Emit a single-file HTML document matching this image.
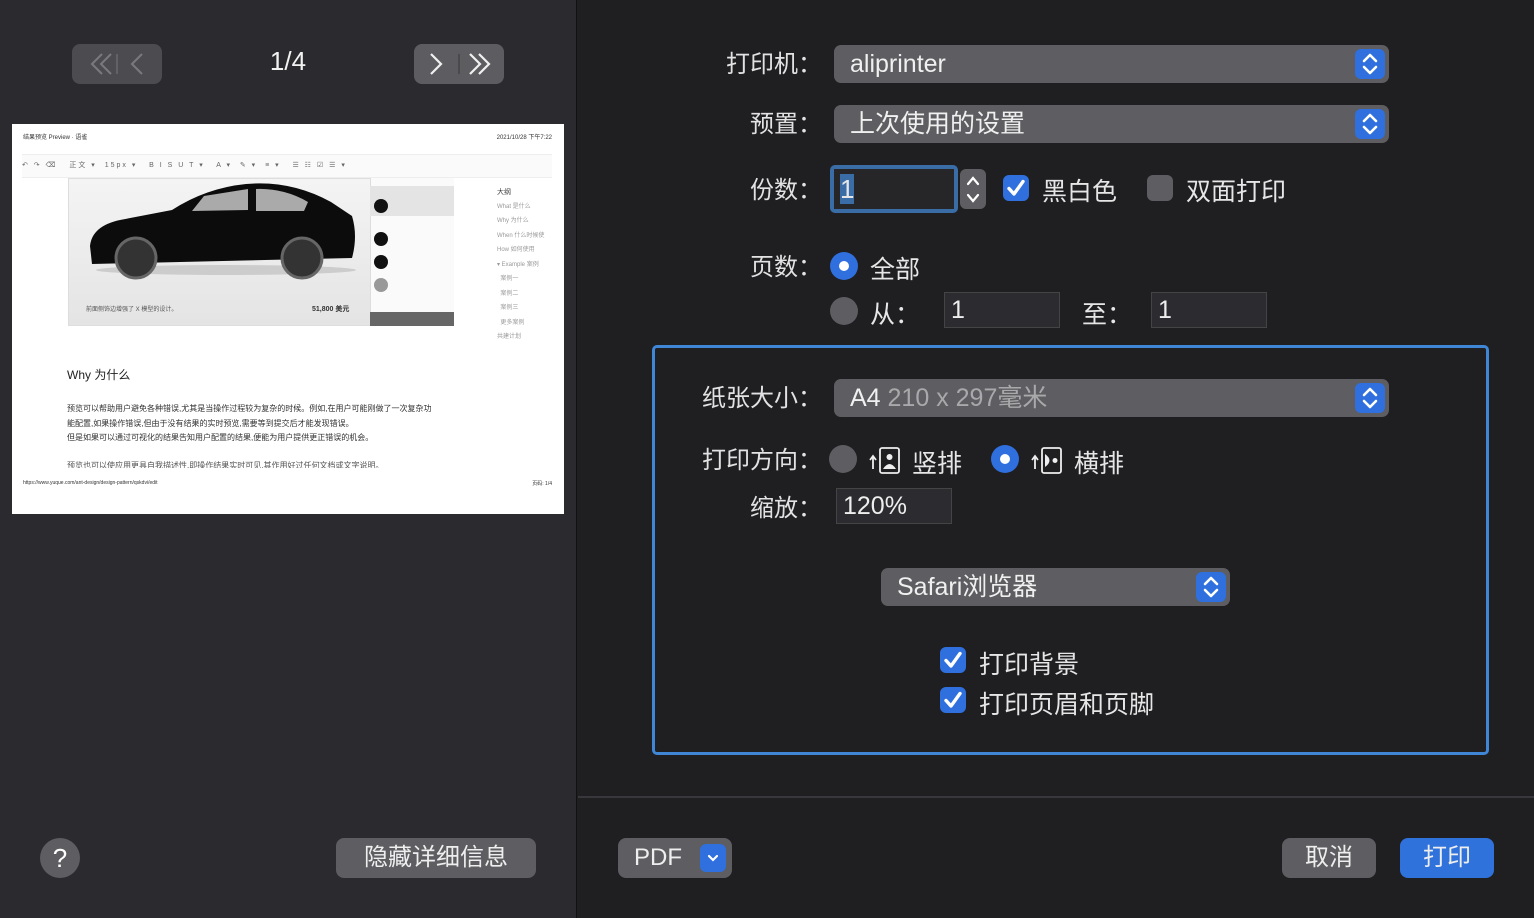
<!DOCTYPE html>
<html><head><meta charset="utf-8"><style>
*{margin:0;padding:0;box-sizing:border-box}
body{width:1534px;height:918px;background:#1f1e21;font-family:"Liberation Sans","Noto Sans CJK SC",sans-serif;color:#e6e6e6;position:relative;overflow:hidden}
.a{position:absolute}
.left{left:0;top:0;width:577px;height:918px;background:#2b2a2e;border-right:1px solid #111}
.lbl{font-size:24px;color:#e2e2e2;text-align:right;width:124px;line-height:30px;margin-top:2px;margin-left:8px}
.sel{background:#5e5d61;border-radius:7px;height:38px;font-size:25px;color:#f0f0f0;padding-left:16px;line-height:38px}
.step{position:absolute;right:4px;top:4px;width:30px;height:30px;background:#2f6fde;border-radius:6px}
.cb{width:26px;height:26px;border-radius:6px;background:#2f6fde}
.rad{width:28px;height:28px;border-radius:50%}
.field{background:#2c2b2f;border:1px solid #444;font-size:25px;color:#eee;padding-left:6px;line-height:34px;height:36px}
.btn{background:#5e5d61;border-radius:8px;color:#eee;font-size:24px;text-align:center}
</style></head><body>
<svg width="0" height="0" style="position:absolute"><defs>
<symbol id="ud" viewBox="0 0 30 30"><path d="M9 12 L15 6 L21 12 M9 18 L15 24 L21 18" fill="none" stroke="#fff" stroke-width="2.6" stroke-linecap="round" stroke-linejoin="round"/></symbol>
<symbol id="ck" viewBox="0 0 26 26"><path d="M6 13.5 L11 19 L20 6.5" fill="none" stroke="#fff" stroke-width="3.4" stroke-linecap="round" stroke-linejoin="round"/></symbol>
</defs></svg>
<div class="a left">
 <div class="a" style="left:72px;top:44px;width:90px;height:40px;background:#4c4b4f;border-radius:8px"><svg width="90" height="40"><path d="M30 10 L20 20 L30 30 M39 10 L29 20 L39 30" fill="none" stroke="#7a797d" stroke-width="2"/><path d="M45 10 L45 30" stroke="#6a696d" stroke-width="1.5"/><path d="M70 10 L60 20 L70 30" fill="none" stroke="#7a797d" stroke-width="2"/></svg></div>
 <div class="a" style="left:250px;top:46px;width:76px;text-align:center;font-size:26px;color:#f2f2f2">1/4</div>
 <div class="a" style="left:414px;top:44px;width:90px;height:40px;background:#5d5c60;border-radius:8px"><svg width="90" height="40"><path d="M17 10 L27 20 L17 30" fill="none" stroke="#f0f0f0" stroke-width="2.2"/><path d="M45 10 L45 30" stroke="#444" stroke-width="1.5"/><path d="M56 10 L66 20 L56 30 M65 10 L75 20 L65 30" fill="none" stroke="#f0f0f0" stroke-width="2.2"/></svg></div>
 <div class="a" style="left:12px;top:124px;width:552px;height:390px;background:#fff;color:#333">
  <div class="a" style="left:11px;top:8px;font-size:6px">结果预览 Preview · 语雀</div>
  <div class="a" style="right:12px;top:8px;font-size:6px">2021/10/28 下午7:22</div>
  <div class="a" style="left:10px;top:30px;width:530px;height:24px;border-top:1px solid #eee;border-bottom:1px solid #eee;background:#fafafa;font-size:7px;color:#666;line-height:22px;letter-spacing:2px">↶ ↷ ⌫ &nbsp; 正文 ▾ &nbsp;15px ▾ &nbsp; B I S U T ▾ &nbsp; A ▾ &nbsp;✎ ▾ &nbsp;≡ ▾ &nbsp; ☰ ☷ ☑ ☰ ▾</div>
  <div class="a" style="left:56px;top:54px;width:386px;height:148px;background:linear-gradient(#f4f4f4,#e4e4e4);border:1px solid #ddd"></div>
  <svg class="a" style="left:74px;top:56px" width="280" height="100" viewBox="0 0 280 100"><path d="M4 66 Q6 46 34 40 L86 30 Q120 8 160 4 Q205 0 245 22 L266 36 Q272 56 266 78 L6 84 Z" fill="#0c0c0c"/><ellipse cx="140" cy="90" rx="130" ry="5" fill="#ccc"/><circle cx="50" cy="78" r="20" fill="#333" stroke="#666" stroke-width="3"/><circle cx="216" cy="78" r="20" fill="#333" stroke="#666" stroke-width="3"/><path d="M118 16 L162 9 L162 30 L106 31Z M170 9 Q198 8 222 22 L218 31 L170 31Z" fill="#aaa"/></svg>
  <div class="a" style="left:358px;top:54px;width:84px;height:134px;background:#fafafa;border-left:1px solid #ddd"></div>
  <div class="a" style="left:358px;top:62px;width:84px;height:30px;background:#e4e4e4"></div>
  <div class="a" style="left:362px;top:75px;width:14px;height:14px;border-radius:50%;background:#111"></div>
  <div class="a" style="left:362px;top:108px;width:14px;height:14px;border-radius:50%;background:#111"></div>
  <div class="a" style="left:362px;top:131px;width:14px;height:14px;border-radius:50%;background:#111"></div>
  <div class="a" style="left:362px;top:154px;width:14px;height:14px;border-radius:50%;background:#999"></div>
  <div class="a" style="left:358px;top:188px;width:84px;height:14px;background:#666"></div>
  <div class="a" style="left:300px;top:180px;font-size:7px;font-weight:bold">51,800 美元</div>
  <div class="a" style="left:74px;top:180px;font-size:6px;color:#555">前面侧饰边增强了 X 模型的设计。</div>
  <div class="a" style="left:485px;top:62px;font-size:7px;color:#444;line-height:13.5px">大纲<br><span style="color:#999;font-size:6px">What 是什么<br>Why 为什么<br>When 什么时候使<br>How 如何使用<br>▾ Example 案例<br>&nbsp;&nbsp;案例一<br>&nbsp;&nbsp;案例二<br>&nbsp;&nbsp;案例三<br>&nbsp;&nbsp;更多案例<br>共建计划</span></div>
  <div class="a" style="left:55px;top:242px;font-size:12px;color:#222">Why 为什么</div>
  <div class="a" style="left:55px;top:278px;font-size:8px;color:#333;line-height:14.5px">预览可以帮助用户避免各种错误,尤其是当操作过程较为复杂的时候。例如,在用户可能刚做了一次复杂功<br>能配置,如果操作错误,但由于没有结果的实时预览,需要等到提交后才能发现错误。<br>但是如果可以通过可视化的结果告知用户配置的结果,便能为用户提供更正错误的机会。</div>
  <div class="a" style="left:55px;top:336px;font-size:8px;color:#555">预览也可以使应用更具自我描述性,即操作结果实时可见,其作用好过任何文档或文字说明。</div>
  <div class="a" style="left:10px;top:344px;width:532px;height:8px;background:#fff"></div>
  <div class="a" style="left:11px;top:356px;font-size:5px">https://www.yuque.com/ant-design/design-pattern/qskdvi/edit</div>
  <div class="a" style="right:12px;top:356px;font-size:5px">页码: 1/4</div>
 </div>
 <div class="a" style="left:40px;top:838px;width:40px;height:40px;border-radius:50%;background:#5e5d61;text-align:center;line-height:40px;font-size:26px;color:#fff">?</div>
 <div class="a btn" style="left:336px;top:838px;width:200px;height:40px;line-height:40px">隐藏详细信息</div>
</div>

<div class="a lbl" style="left:690px;top:48px">打印机：</div>
<div class="a sel" style="left:834px;top:45px;width:555px">aliprinter<svg class="step"><use href="#ud"/></svg></div>
<div class="a lbl" style="left:690px;top:108px">预置：</div>
<div class="a sel" style="left:834px;top:105px;width:555px">上次使用的设置<svg class="step"><use href="#ud"/></svg></div>
<div class="a lbl" style="left:690px;top:174px">份数：</div>
<div class="a" style="left:830px;top:165px;width:128px;height:48px;border-radius:5px;background:#3a6da6;padding:4px"><div style="background:#262528;height:40px;font-size:26px;line-height:40px;padding-left:6px"><span style="background:#3a6da6">1</span></div></div>
<svg class="a" style="left:960px;top:169px;width:26px;height:40px;border-radius:6px;background:#5e5d61" viewBox="0 0 26 40"><path d="M8 15 L13 9 L18 15 M8 26 L13 32 L18 26" fill="none" stroke="#fff" stroke-width="2.2" stroke-linecap="round"/></svg>
<svg class="a cb" style="left:1003px;top:175px"><use href="#ck"/></svg>
<div class="a" style="left:1042px;top:172px;font-size:25px">黑白色</div>
<div class="a cb" style="left:1147px;top:175px;background:#5e5d61"></div>
<div class="a" style="left:1186px;top:172px;font-size:25px">双面打印</div>
<div class="a lbl" style="left:690px;top:251px">页数：</div>
<div class="a rad" style="left:830px;top:252px;background:#2f6fde"><div style="margin:9px;width:10px;height:10px;border-radius:50%;background:#fff"></div></div>
<div class="a" style="left:870px;top:250px;font-size:25px">全部</div>
<div class="a rad" style="left:830px;top:297px;background:#5e5d61"></div>
<div class="a" style="left:870px;top:295px;font-size:25px">从：</div>
<div class="a field" style="left:944px;top:292px;width:116px">1</div>
<div class="a" style="left:1082px;top:295px;font-size:25px">至：</div>
<div class="a field" style="left:1151px;top:292px;width:116px">1</div>

<div class="a" style="left:652px;top:345px;width:837px;height:410px;border:3px solid #3f86d6;border-radius:5px"></div>
<div class="a lbl" style="left:690px;top:382px">纸张大小：</div>
<div class="a sel" style="left:834px;top:379px;width:555px">A4 <span style="color:#a9a9ab">210 x 297毫米</span><svg class="step"><use href="#ud"/></svg></div>
<div class="a lbl" style="left:690px;top:444px">打印方向：</div>
<div class="a rad" style="left:829px;top:445px;background:#5e5d61"></div>
<svg class="a" style="left:866px;top:445px" width="40" height="30"><path d="M7 24 L7 12 M4 15 L7 11 L10 15" fill="none" stroke="#eee" stroke-width="1.8"/><rect x="14" y="3" width="19" height="25" rx="2" fill="none" stroke="#eee" stroke-width="1.8"/><circle cx="23.5" cy="12" r="3" fill="#eee"/><path d="M17 24 Q23.5 14 30 24Z" fill="#eee"/></svg>
<div class="a" style="left:912px;top:444px;font-size:25px">竖排</div>
<div class="a rad" style="left:991px;top:445px;background:#2f6fde"><div style="margin:9px;width:10px;height:10px;border-radius:50%;background:#fff"></div></div>
<svg class="a" style="left:1028px;top:445px" width="40" height="30"><path d="M7 24 L7 12 M4 15 L7 11 L10 15" fill="none" stroke="#eee" stroke-width="1.8"/><rect x="14" y="3" width="19" height="25" rx="2" fill="none" stroke="#eee" stroke-width="1.8"/><path d="M17 9 Q26 15.5 17 22Z" fill="#eee"/><circle cx="27" cy="15.5" r="2.5" fill="#eee"/></svg>
<div class="a" style="left:1074px;top:444px;font-size:25px">横排</div>
<div class="a lbl" style="left:690px;top:492px">缩放：</div>
<div class="a field" style="left:836px;top:488px;width:116px">120%</div>
<div class="a sel" style="left:881px;top:568px;width:349px">Safari浏览器<svg class="step"><use href="#ud"/></svg></div>
<svg class="a cb" style="left:940px;top:647px"><use href="#ck"/></svg>
<div class="a" style="left:979px;top:645px;font-size:25px">打印背景</div>
<svg class="a cb" style="left:940px;top:687px"><use href="#ck"/></svg>
<div class="a" style="left:979px;top:685px;font-size:25px">打印页眉和页脚</div>

<div class="a" style="left:578px;top:796px;width:956px;height:2px;background:#38373b"></div>
<div class="a btn" style="left:618px;top:838px;width:114px;height:40px;line-height:40px;text-align:left;padding-left:16px">PDF<svg class="a" style="right:6px;top:6px;width:26px;height:28px;background:#2f6fde;border-radius:6px" viewBox="0 0 26 28"><path d="M9 12 L13 16 L17 12" fill="none" stroke="#fff" stroke-width="2.2" stroke-linecap="round"/></svg></div>
<div class="a btn" style="left:1282px;top:838px;width:94px;height:40px;line-height:40px">取消</div>
<div class="a btn" style="left:1400px;top:838px;width:94px;height:40px;line-height:40px;background:#2f72db">打印</div>
</body></html>
